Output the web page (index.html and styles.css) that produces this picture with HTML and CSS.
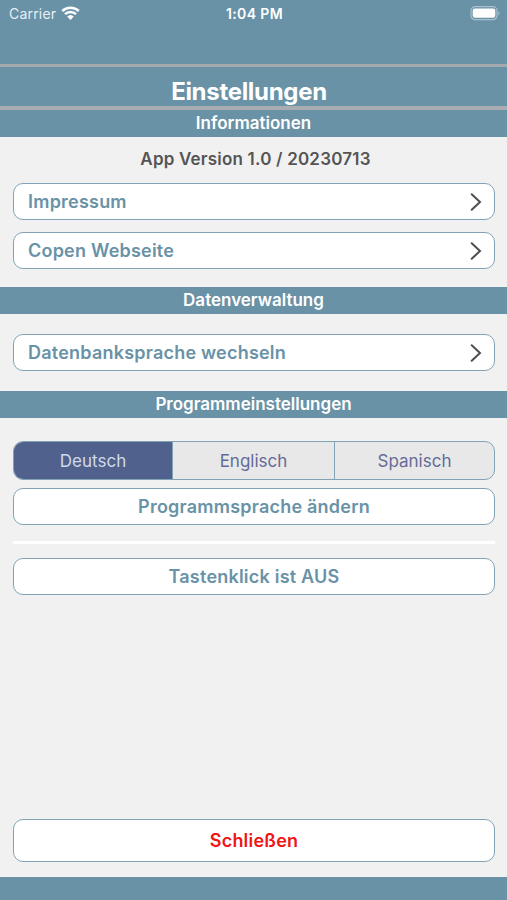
FILE: index.html
```html
<!DOCTYPE html>
<html lang="de">
<head>
    <title>Einstellungen</title>
    <meta charset="UTF-8">
    <meta name="viewport" content="width=device-width">

    <link rel="stylesheet" href="styles.css">
</head>
<body>

<div class="statusbar">
    <div class="carrier">
        <span>Carrier</span>
        <svg class="wifi" width="19" height="14" viewBox="0 0 19 14">
            <path d="M1.200 5a12 12 0 0 1 16.600 0M4 8.100a8 8 0 0 1 11 0" fill="none" stroke="#fff" stroke-width="2.500"/>
            <path d="M6.200 10.600a4.800 4.800 0 0 1 6.600 0L9.500 13.900z" fill="#fff"/>
        </svg>
    </div>
    <div class="time">1:04 PM</div>
    <div class="battery">
        <svg width="31" height="15" viewBox="0 0 31 15">
            <rect x="1" y="0.700" width="26" height="13" rx="4" fill="none" stroke="#a9c0cd" stroke-width="1.200"/>
            <rect x="2.700" y="2.500" width="22.600" height="9.300" rx="2" fill="#fff"/>
            <path d="M28.500 5q2.200 2.200 0 4.400z" fill="#a9c0cd"/>
        </svg>
    </div>
</div>

<h1>Einstellungen</h1>

<div class="content">
    <h2>Informationen</h2>
    <div class="group info">
        <div class="version">App Version 1.0 / 20230713</div>
        <button class="row">Impressum <svg class="arrow" viewBox="0 0 12 18"><path d="M1.700 1.200L10 9l-8.300 7.800"/></svg></button>
        <button class="row">Copen Webseite <svg class="arrow" viewBox="0 0 12 18"><path d="M1.700 1.200L10 9l-8.300 7.800"/></svg></button>
    </div>

    <h2>Datenverwaltung</h2>
    <div class="group data">
        <button class="row">Datenbanksprache wechseln <svg class="arrow" viewBox="0 0 12 18"><path d="M1.700 1.200L10 9l-8.300 7.800"/></svg></button>
    </div>

    <h2>Programmeinstellungen</h2>
    <div class="group program">
        <div class="segments">
            <div class="active">Deutsch</div>
            <div>Englisch</div>
            <div>Spanisch</div>
        </div>
        <button class="change">Programmsprache ändern</button>
        <hr>
        <button class="click">Tastenklick ist AUS</button>
    </div>

    <button class="close">Schließen</button>
</div>

<div class="footer"></div>

</body>
</html>
```
FILE: styles.css
```css
html {
    box-sizing: border-box;
}
*, *:before, *:after {
    box-sizing: inherit;
}

body{
    margin: 0;
    height: 900px;
    display: flex;
    flex-direction: column;
    font-family: Inter, "Liberation Sans", sans-serif;
    background-color: #f1f1f1;
}

.statusbar{
    height: 64px;
    padding: 6px 7px 0 9px;
    display: grid;
    grid-template-columns: 1fr auto 1fr;
    align-items: start;
    background-color: #6992a7;
    color: #fff;
    font-size: 14px;
    line-height: 16px;
}

.carrier{
    display: flex;
    gap: 5px;
    color: #e6eff3;
    letter-spacing: 0.2px;
}

.wifi{
    display: block;
}

.time{
    font-weight: 600;
    letter-spacing: 0.4px;
}

.battery{
    justify-self: end;
    margin-right: -1px;
}

.battery svg{
    display: block;
}

h1{
    margin: 0;
    height: 46px;
    padding: 4px 9px 0 0;
    border-top: 3px solid #a3a9ad;
    border-bottom: 4px solid #a9acb0;
    background-color: #6992a7;
    color: #fff;
    font-size: 24px;
    font-weight: 700;
    line-height: 42px;
    letter-spacing: -0.3px;
    text-align: center;
}

.content{
    flex: 1;
    display: flex;
    flex-direction: column;
}

h2{
    margin: 0;
    height: 27px;
    background-color: #6992a7;
    color: #fff;
    font-size: 17px;
    font-weight: 600;
    line-height: 27px;
    text-align: center;
}

.group{
    padding: 0 12px 0 13px;
}

.info{
    height: 150px;
}

.data{
    height: 77px;
    padding-top: 20px;
}

.program{
    padding-top: 23px;
}

.version{
    height: 46px;
    padding: 11px 0 0 3px;
    color: #555;
    font-size: 17px;
    font-weight: 600;
    line-height: 22px;
    letter-spacing: 0.2px;
    text-align: center;
}

button{
    display: block;
    width: 100%;
    height: 37px;
    margin: 0;
    padding: 0;
    border: 1.5px solid #82a3b5;
    border-radius: 10px;
    background-color: #fff;
    color: #6992a7;
    font-family: inherit;
    font-size: 18px;
    font-weight: 600;
    letter-spacing: 0.22px;
    text-align: center;
}

.row{
    display: flex;
    justify-content: space-between;
    align-items: center;
    padding: 0 12px 0 14px;
}

.row + .row{
    margin-top: 12px;
}

.arrow{
    width: 12px;
    height: 18px;
    fill: none;
    stroke: #4e4e4e;
    stroke-width: 2;
    stroke-linecap: round;
}

.segments{
    display: grid;
    grid-template-columns: 158px 162px 1fr;
    height: 39px;
    border: 1.5px solid #82a3b5;
    border-radius: 10px;
    overflow: hidden;
    background-color: #e8e8e8;
    color: #646b98;
    font-size: 17px;
    line-height: 38px;
    text-align: center;
}

.segments div + div{
    border-left: 1.5px solid #82a3b5;
}

.segments .active{
    background-color: #50618d;
    color: #cfd9e8;
}

.change{
    margin-top: 8px;
}

hr{
    height: 3px;
    margin: 16px 0 14px;
    border: 0;
    background-color: #fff;
}

.close{
    width: auto;
    height: 43px;
    margin: auto 12px 15px 13px;
    color: #f01414;
}

.footer{
    height: 23px;
    background-color: #6992a7;
}
```
